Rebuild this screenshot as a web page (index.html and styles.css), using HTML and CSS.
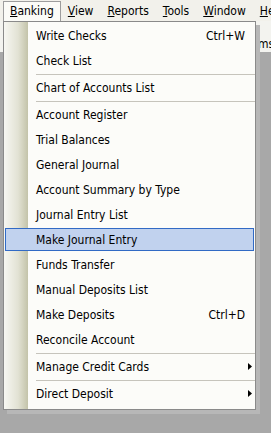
FILE: index.html
```html
<!DOCTYPE html>
<html>
<head>
<meta charset="utf-8">
<link rel="stylesheet" href="styles.css">
</head>
<body>
<div class="app">
  <div class="menubar">
    <span class="mb-item active"><u>B</u>anking</span>
    <span class="mb-item"><u>V</u>iew</span>
    <span class="mb-item"><u>R</u>eports</span>
    <span class="mb-item"><u>T</u>ools</span>
    <span class="mb-item"><u>W</u>indow</span>
    <span class="mb-item"><u>H</u>elp</span>
  </div>
  <div class="toolbar">
    <span class="tb-icon"></span>
    <span class="tb-label">Items</span>
  </div>
  <div class="workspace"></div>

  <div class="dropdown">
    <div class="item"><span class="label">Write Checks</span><span class="shortcut">Ctrl+W</span></div>
    <div class="item"><span class="label">Check List</span></div>
    <div class="sep"></div>
    <div class="item"><span class="label">Chart of Accounts List</span></div>
    <div class="sep"></div>
    <div class="item"><span class="label">Account Register</span></div>
    <div class="item"><span class="label">Trial Balances</span></div>
    <div class="item"><span class="label">General Journal</span></div>
    <div class="item"><span class="label">Account Summary by Type</span></div>
    <div class="item"><span class="label">Journal Entry List</span></div>
    <div class="item hot"><span class="label">Make Journal Entry</span></div>
    <div class="item"><span class="label">Funds Transfer</span></div>
    <div class="item"><span class="label">Manual Deposits List</span></div>
    <div class="item"><span class="label">Make Deposits</span><span class="shortcut">Ctrl+D</span></div>
    <div class="item"><span class="label">Reconcile Account</span></div>
    <div class="sep"></div>
    <div class="item sub"><span class="label">Manage Credit Cards</span><svg class="arrow" width="4" height="7" viewBox="0 0 4 7"><polygon points="0,0 4,3.5 0,7" fill="#000"/></svg></div>
    <div class="sep"></div>
    <div class="item sub"><span class="label">Direct Deposit</span><svg class="arrow" width="4" height="7" viewBox="0 0 4 7"><polygon points="0,0 4,3.5 0,7" fill="#000"/></svg></div>
  </div>
</div>
</body>
</html>
```

FILE: styles.css
```css
* { box-sizing: border-box; }

html, body {
  margin: 0;
  padding: 0;
  width: 271px;
  height: 433px;
  overflow: hidden;
  background: #a8a8a8;
}

body {
  font-family: "DejaVu Sans Condensed", "DejaVu Sans", sans-serif;
  font-size: 12px;
  color: #000;
}

.app {
  position: relative;
  width: 271px;
  height: 433px;
  display: flex;
  flex-direction: column;
}

/* ---------- menu bar ---------- */
.menubar {
  height: 21px;
  background: #f2f1eb;
  display: flex;
  align-items: flex-end;
  padding-left: 3px;
  white-space: nowrap;
  overflow: hidden;
}

.mb-item {
  height: 20px;
  line-height: 19px;
  padding: 0 6px;
  border: 1px solid transparent;
  border-bottom: none;
}

.mb-item u {
  text-decoration-thickness: 1px;
  text-underline-offset: 1px;
}

.mb-item.active {
  background: #fbfbf7;
  border-color: #9d9d9d;
  position: relative;
  z-index: 2;
}

/* ---------- toolbar behind ---------- */
.toolbar {
  height: 31px;
  background: #f3f3ef;
  display: flex;
  align-items: flex-start;
  white-space: nowrap;
  overflow: hidden;
}

.tb-icon {
  width: 3px;
  height: 24px;
  margin-top: 9px;
  background: linear-gradient(#e8642a, #d23b1c 50%, #8d7c74);
}

.tb-label {
  margin-left: 244px;
  margin-top: 16px;
  line-height: 14px;
}

.workspace {
  flex: 1;
  background: #a8a8a8;
}

/* ---------- dropdown ---------- */
.dropdown {
  position: absolute;
  left: 3px;
  top: 21px;
  width: 253px;
  padding: 1px 0 3px;
  border: 1px solid #8a8a8a;
  background: linear-gradient(to right, #f7f7f2 0, #e2e2d4 14px, #c3c3a9 24px, #fcfcf9 24px);
  box-shadow: 4px 4px 0 #b7b7b7;
  z-index: 1;
}

.item {
  height: 25px;
  display: flex;
  align-items: center;
  padding-left: 32px;
  padding-right: 10px;
  white-space: nowrap;
}

.item.hot {
  height: 23px;
  margin: 1px 1px;
  padding-left: 30px;
  border: 1px solid #316ac5;
  background: #c1d2ee;
}

.item.sub {
  padding-right: 3px;
}

.shortcut,
.arrow {
  margin-left: auto;
}

.sep {
  height: 1px;
  margin-top: 1px;
  margin-left: 32px;
  background: #c6c4bc;
}
```
